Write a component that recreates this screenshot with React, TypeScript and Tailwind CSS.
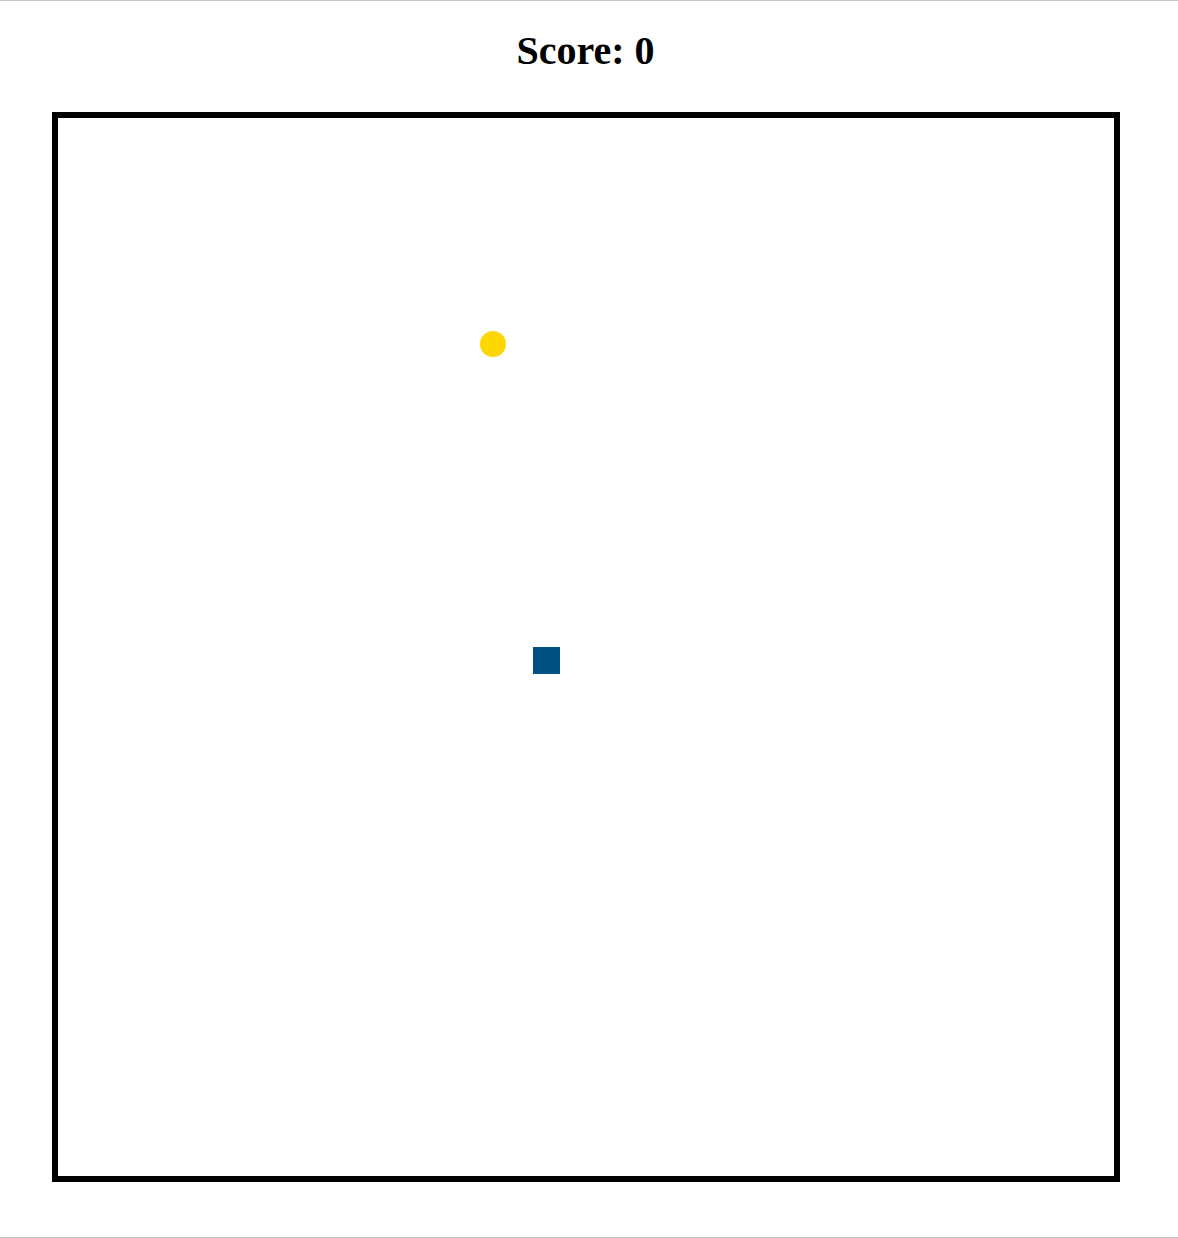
export default function App() {
  return (
    <div className="w-[1178px] h-[1238px] bg-white flex flex-col border-t border-b border-[#c4c4c4]" style={{ fontFamily: '"Liberation Serif", "Times New Roman", serif' }}>
      <div className="h-[111px] flex justify-center">
        <h1 className="mt-[26px] text-[40px] leading-[48px] font-bold text-black pr-[7px]">Score: 0</h1>
      </div>
      <div className="ml-[52px] w-[1068px] h-[1070px] border-[6px] border-black relative">
        <div className="absolute left-[422px] top-[213px] w-[26px] h-[26px] rounded-full bg-[#ffd700]" />
        <div className="absolute left-[475px] top-[529px] w-[27px] h-[27px] bg-[#005082]" />
      </div>
    </div>
  );
}
